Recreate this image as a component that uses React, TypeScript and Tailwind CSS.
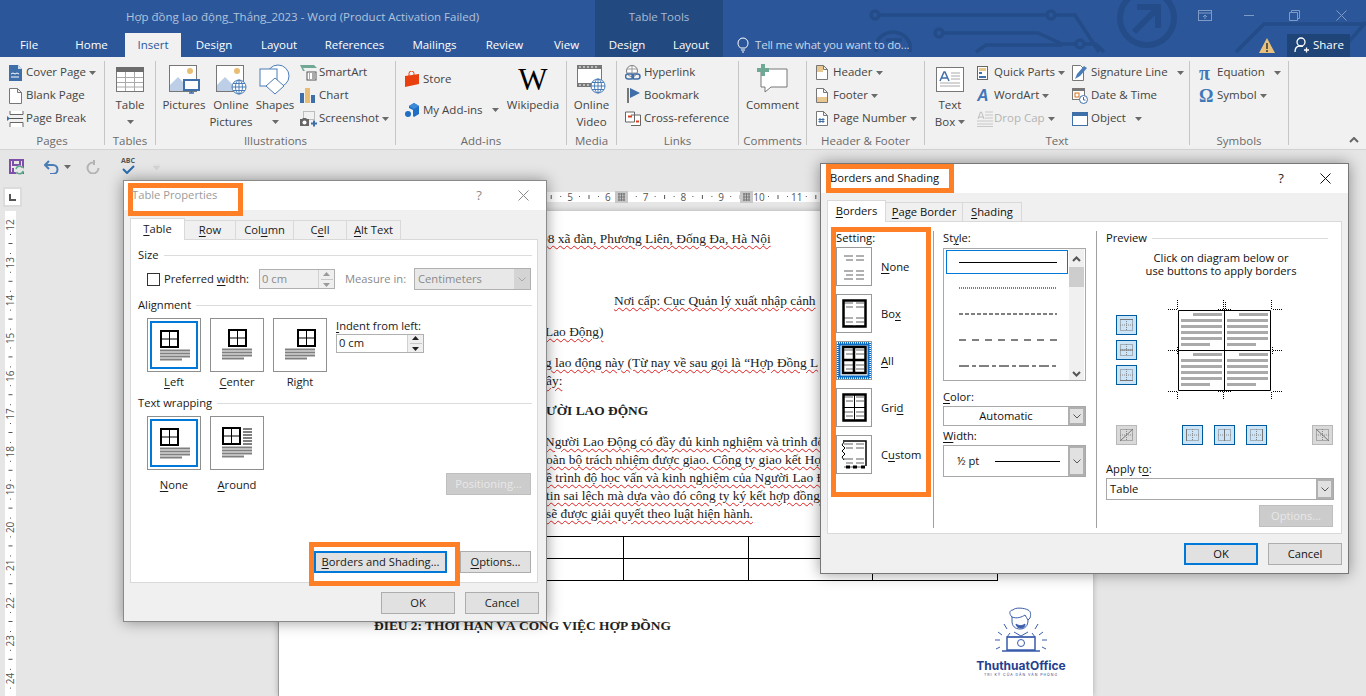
import type { ReactNode } from 'react';

const Caret = ({ className = '' }: { className?: string }) => (
  <svg width="7" height="4" viewBox="0 0 7 4" className={`shrink-0 ${className}`}>
    <path d="M0 0h7L3.500 4z" fill="#6a6a6a" />
  </svg>
);

// ---- ribbon icons ----
const CoverIcon = () => (
  <svg width="13" height="16" viewBox="0 0 13 16">
    <path d="M0 0h9l4 4v12H0z" fill="#3f6fa8" />
    <path d="M9 0v4h4z" fill="#cfdff0" />
    <path d="M2 9l2-1 2 1 2-1 2 1" stroke="#fff" fill="none" />
    <path d="M2 12h8" stroke="#fff" />
  </svg>
);
const BlankIcon = () => (
  <svg width="13" height="16" viewBox="0 0 13 16">
    <path d="M.5.5h8l4 4v11H.5z M8.500.5v4h4" fill="#fff" stroke="#777" />
  </svg>
);
const BreakIcon = () => (
  <svg width="17" height="16" viewBox="0 0 17 16">
    <path d="M3 0v3.500h13V0 M3 16v-4.500h13V16" fill="#fff" stroke="#666" />
    <path d="M1 7.500h15" stroke="#555" />
    <path d="M0 5l3 2.500L0 10z" fill="#3f6fa8" />
  </svg>
);
const TableIcon = () => (
  <svg width="28" height="25" viewBox="0 0 28 25">
    <rect x=".5" y=".5" width="27" height="24" fill="#fff" stroke="#777" />
    <rect width="28" height="5" fill="#6d6d6d" />
    <path d="M9.500 5v19M18.500 5v19M1 10.500h26M1 15.500h26M1 20h26" stroke="#aaa" />
  </svg>
);
const PictureBase = () => (
  <>
    <rect x=".5" y="1.500" width="27" height="26" fill="#fff" stroke="#777" />
    <circle cx="21" cy="7" r="3" fill="#e8bd74" />
    <path d="M1 27v-6l8-8 9 9v5z" fill="#bccfe6" />
  </>
);
const PicturesIcon = () => (
  <svg width="31" height="31" viewBox="0 0 31 31">
    <PictureBase />
    <rect x="15" y="16" width="15" height="10" fill="#fff" stroke="#3f6fa8" strokeWidth="2" />
    <path d="M20 29h5M22.500 26v3" stroke="#3f6fa8" strokeWidth="1.500" />
  </svg>
);
const Globe = ({ x, y, r }: { x: number; y: number; r: number }) => (
  <g stroke="#4a7db8" fill="#fff">
    <circle cx={x} cy={y} r={r} />
    <ellipse cx={x} cy={y} rx={r / 2} ry={r} fill="none" />
    <path d={`M${x - r} ${y}h${2 * r}M${x} ${y - r}v${2 * r}M${x - r + 1} ${y - r / 2}h${2 * r - 2}M${x - r + 1} ${y + r / 2}h${2 * r - 2}`} fill="none" />
  </g>
);
const OnlinePicIcon = () => (
  <svg width="31" height="31" viewBox="0 0 31 31">
    <PictureBase />
    <Globe x={23} y={23} r={7} />
  </svg>
);
const ShapesIcon = () => (
  <svg width="32" height="31" viewBox="0 0 32 31">
    <circle cx="19" cy="12" r="11" fill="#fff" stroke="#4a7db8" />
    <rect x="1" y="5" width="17" height="17" fill="#fff" stroke="#4a7db8" />
    <path d="M16 14l9 8-9 8-9-8z" fill="#fff" stroke="#4a7db8" />
  </svg>
);
const SmartArtIcon = () => (
  <svg width="17" height="16" viewBox="0 0 17 16">
    <path d="M0 0h14l3 3H3l2 3H3z" fill="#6fa894" />
    <rect x="7" y="7" width="9" height="8" fill="#fff" stroke="#555" />
    <path d="M9 9h1M12 9h3M9 11h1M12 11h3M9 13h1M12 13h3" stroke="#555" />
  </svg>
);
const ChartIcon = () => (
  <svg width="15" height="15" viewBox="0 0 15 15">
    <rect y="5" width="4" height="10" fill="#3f6fa8" />
    <rect x="5" width="5" height="15" fill="#e8bd74" />
    <rect x="11" y="7" width="4" height="8" fill="#3f6fa8" />
  </svg>
);
const ScreenshotIcon = () => (
  <svg width="17" height="16" viewBox="0 0 17 16">
    <rect x="3.500" y=".5" width="11" height="8" fill="none" stroke="#888" strokeDasharray="1 1" />
    <path d="M0 8h2l1-1h3l1 1h2v7H0z" fill="#666" />
    <circle cx="4.500" cy="11.500" r="2" fill="#fff" />
    <path d="M11 12.500h6M14 9.500v6" stroke="#3f6fa8" strokeWidth="2" />
  </svg>
);
const StoreIcon = () => (
  <svg width="14" height="16" viewBox="0 0 14 16">
    <path d="M0 5l14-2v10L0 16z" fill="#e8410f" />
    <path d="M4 5V2.500a2 2 0 0 1 5 0V4" fill="none" stroke="#e8410f" />
  </svg>
);
const AddInsIcon = () => (
  <svg width="14" height="15" viewBox="0 0 14 15">
    <circle cx="3" cy="11" r="3" fill="#1f6fc4" />
    <path d="M4 3l5-3 5 3v8l-5 3-1-1V7L4 5z" fill="#1f6fc4" />
    <path d="M9 0l5 3-5 3-5-3z" fill="#3d8ad8" />
  </svg>
);
const VideoIcon = () => (
  <svg width="29" height="29" viewBox="0 0 29 29">
    <rect x=".5" y=".5" width="24" height="21" fill="#fff" stroke="#777" />
    <rect width="25" height="4" fill="#777" />
    <rect y="18" width="25" height="4" fill="#777" />
    <path d="M2 2h2M6 2h2M10 2h2M14 2h2M18 2h2M2 20h2M6 20h2M10 20h2" stroke="#fff" />
    <Globe x={21} y={21} r={7} />
  </svg>
);
const HyperlinkIcon = () => (
  <svg width="16" height="16" viewBox="0 0 16 16">
    <circle cx="7" cy="6" r="5.500" fill="#fff" stroke="#777" />
    <path d="M7 .5v9M2 4h10M2 8h10" stroke="#999" />
    <rect x=".5" y="9" width="8" height="5" rx="2.500" fill="none" stroke="#3f6fa8" strokeWidth="1.500" />
    <rect x="7" y="9" width="8" height="5" rx="2.500" fill="none" stroke="#3f6fa8" strokeWidth="1.500" />
  </svg>
);
const BookmarkIcon = () => (
  <svg width="13" height="15" viewBox="0 0 13 15">
    <path d="M1 0v15" stroke="#777" strokeWidth="2" />
    <path d="M3 0l10 5-10 5z" fill="#3f6fa8" />
  </svg>
);
const CrossRefIcon = () => (
  <svg width="16" height="15" viewBox="0 0 16 15">
    <path d="M.5 1h9v10h-9z M6 4h9.500v10.500H6" fill="#fff" stroke="#666" />
    <path d="M3 5.500h4" stroke="#d8401f" strokeWidth="2" />
    <path d="M11 10.500h3" stroke="#d8401f" strokeWidth="2" />
  </svg>
);
const CommentIcon = () => (
  <svg width="31" height="30" viewBox="0 0 31 30">
    <path d="M4 5h26v18H14l-6 5v-5H4z" fill="#fff" stroke="#777" />
    <path d="M0 6h12M6 0v12" stroke="#6fa894" strokeWidth="4" />
  </svg>
);
const HeaderIcon = ({ band }: { band: 'top' | 'bottom' }) => (
  <svg width="12" height="15" viewBox="0 0 12 15">
    <path d="M.5.5h7l4 4v10H.5z M7.500.5v4h4" fill="#fff" stroke="#777" />
    <rect x="1" y={band === 'top' ? 1 : 9} width={band === 'top' ? 6 : 10} height={band === 'top' ? 6 : 5} fill="#e8c88e" />
  </svg>
);
const PageNumIcon = () => (
  <svg width="12" height="15" viewBox="0 0 12 15">
    <path d="M.5.5h7l4 4v10H.5z M7.500.5v4h4" fill="#fff" stroke="#777" />
    <path d="M4 7v5M7 7v5M2.500 8.500h6M2.500 10.500h6" stroke="#3f6fa8" />
  </svg>
);
const TextBoxIcon = () => (
  <svg width="28" height="25" viewBox="0 0 28 25">
    <rect x=".5" y=".5" width="27" height="24" fill="#fff" stroke="#777" />
    <path d="M15 6h9M15 9h9M15 12h9M4 16h20M4 19h20" stroke="#aaa" />
    <path d="M4 14l4-9h1l4 9M5.500 11h6" fill="none" stroke="#3f6fa8" strokeWidth="1.500" />
  </svg>
);
const QuickPartsIcon = () => (
  <svg width="11" height="14" viewBox="0 0 11 14">
    <rect x=".5" y=".5" width="10" height="13" fill="#fff" stroke="#666" />
    <rect x="2" y="2" width="7" height="3" fill="#e8c88e" />
    <rect x="2" y="6" width="3" height="2" fill="#3f6fa8" />
    <rect x="2" y="10" width="7" height="2" fill="#3f6fa8" />
  </svg>
);
const DropCapIcon = () => (
  <svg width="16" height="16" viewBox="0 0 16 16">
    <path d="M8 1h8M8 4h8M8 7h8M0 10h16M0 13h16M0 15.500h16" stroke="#c8c8c8" />
    <path d="M1 8l2.500-7h1L7 8M2 6h4" fill="none" stroke="#bdbdbd" />
  </svg>
);
const SignatureIcon = () => (
  <svg width="16" height="16" viewBox="0 0 16 16">
    <path d="M.5.5h8l3 3v12H.5z" fill="#fff" stroke="#777" />
    <path d="M3 14l2-5 7-8 3 2-7 8z" fill="#4a7db8" />
  </svg>
);
const DateIcon = () => (
  <svg width="16" height="16" viewBox="0 0 16 16">
    <rect x=".5" y=".5" width="12" height="11" fill="#fff" stroke="#777" />
    <rect width="13" height="3" fill="#777" />
    <rect x="3" y="5" width="4" height="4" fill="none" stroke="#d8701f" />
    <circle cx="11.500" cy="11.500" r="4" fill="#fff" stroke="#3f6fa8" />
    <path d="M11.500 9v3h2" fill="none" stroke="#3f6fa8" />
  </svg>
);
const ObjectIcon = () => (
  <svg width="16" height="14" viewBox="0 0 16 14">
    <rect x=".5" y=".5" width="15" height="13" fill="#fff" stroke="#3f6fa8" />
    <rect width="16" height="4" fill="#3f6fa8" />
  </svg>
);

const Large = ({ w, icon, lines, caretLine }: { w: string; icon: ReactNode; lines: ReactNode[]; caretLine?: boolean }) => (
  <div className={`flex flex-col items-center shrink-0 ${w}`}>
    <div className="h-[36px] flex items-center justify-center">{icon}</div>
    {lines.map((l, i) => (
      <div key={i} className="h-[17px] pb-[1px] flex items-center gap-[3px] whitespace-nowrap">{l}</div>
    ))}
    {caretLine && <Caret className="mt-[6px]" />}
  </div>
);

const Small = ({ icon, text, caret, wide, dim, iw = 'w-[17px]' }: { icon: ReactNode; text: string; caret?: boolean; wide?: boolean; dim?: boolean; iw?: string }) => (
  <div className={`h-[23px] flex items-center whitespace-nowrap ${dim ? 'text-[#b4b4b4]' : ''}`}>
    <span className={`${iw} flex items-center shrink-0`}>{icon}</span>
    <span className="-mt-[2px]">{text}</span>
    {caret && <Caret className={wide ? 'ml-[9px]' : 'ml-[3px]'} />}
  </div>
);

const Group = ({ w, label, children, className = '' }: { w: string; label: string; children: ReactNode; className?: string }) => (
  <div className={`${w} h-[84px] mt-[4px] flex flex-col border-r border-[#c6c6c6] shrink-0`}>
    <div className={`h-[72px] flex shrink-0 ${className}`}>{children}</div>
    <div className="h-[16px] shrink-0 leading-[16px] text-center text-[#6b6b6b] whitespace-nowrap">{label}</div>
  </div>
);

const Ribbon = () => (
  <div className="h-[93px] bg-[#f1f1f1] border-b border-[#d4d4d4] flex text-[#444] text-[11.5px] shrink-0">
    <Group w="w-[105px]" label="Pages" className="pl-[9px]">
      <div>
        <Small icon={<CoverIcon />} text="Cover Page" caret />
        <Small icon={<BlankIcon />} text="Blank Page" />
        <Small icon={<span className="-ml-[2px]"><BreakIcon /></span>} text="Page Break" />
      </div>
    </Group>
    <Group w="w-[51px]" label="Tables">
      <Large w="w-full" icon={<TableIcon />} lines={['Table']} caretLine />
    </Group>
    <Group w="w-[240px]" label="Illustrations" className="pl-[4px]">
      <Large w="w-[48px]" icon={<PicturesIcon />} lines={['Pictures']} />
      <Large w="w-[46px]" icon={<OnlinePicIcon />} lines={['Online', 'Pictures']} />
      <Large w="w-[42px]" icon={<ShapesIcon />} lines={['Shapes']} caretLine />
      <div className="ml-[4px]">
        <Small icon={<SmartArtIcon />} text="SmartArt" iw="w-[19px]" />
        <Small icon={<ChartIcon />} text="Chart" iw="w-[19px]" />
        <Small icon={<ScreenshotIcon />} text="Screenshot" caret iw="w-[19px]" />
      </div>
    </Group>
    <Group w="w-[171px]" label="Add-ins" className="pl-[9px]">
      <div className="w-[105px] shrink-0 whitespace-nowrap">
        <div className="h-[36px] flex items-center"><span className="w-[18px]"><StoreIcon /></span>Store</div>
        <div className="h-[26px] flex items-center"><span className="w-[18px]"><AddInsIcon /></span>My Add-ins<Caret className="ml-[9px]" /></div>
      </div>
      <Large w="w-[46px]" icon={<span className="font-['Liberation_Serif',serif] text-[31px] leading-[31px] text-black">W</span>} lines={['Wikipedia']} />
    </Group>
    <Group w="w-[50px]" label="Media">
      <Large w="w-full" icon={<VideoIcon />} lines={['Online', 'Video']} />
    </Group>
    <Group w="w-[122px]" label="Links" className="pl-[8px]">
      <div>
        <Small icon={<HyperlinkIcon />} text="Hyperlink" iw="w-[19px]" />
        <Small icon={<span className="ml-[2px]"><BookmarkIcon /></span>} text="Bookmark" iw="w-[19px]" />
        <Small icon={<CrossRefIcon />} text="Cross-reference" iw="w-[19px]" />
      </div>
    </Group>
    <Group w="w-[68px]" label="Comments">
      <Large w="w-full" icon={<CommentIcon />} lines={['Comment']} />
    </Group>
    <Group w="w-[118px]" label="Header & Footer" className="pl-[9px]">
      <div>
        <Small icon={<HeaderIcon band="top" />} text="Header" caret />
        <Small icon={<HeaderIcon band="bottom" />} text="Footer" caret />
        <Small icon={<PageNumIcon />} text="Page Number" caret />
      </div>
    </Group>
    <Group w="w-[265px]" label="Text">
      <Large w="w-[50px]" icon={<TextBoxIcon />} lines={['Text', <>Box<Caret /></>]} />
      <div className="ml-[2px] w-[95px] shrink-0">
        <Small icon={<QuickPartsIcon />} text="Quick Parts" caret />
        <Small icon={<span className="font-['Liberation_Sans',sans-serif] italic font-bold text-[16px] leading-[16px] text-[#3f78b8]">A</span>} text="WordArt" caret />
        <Small icon={<DropCapIcon />} text="Drop Cap" caret dim />
      </div>
      <div>
        <Small icon={<SignatureIcon />} text="Signature Line" caret wide iw="w-[19px]" />
        <Small icon={<DateIcon />} text="Date & Time" iw="w-[19px]" />
        <Small icon={<ObjectIcon />} text="Object" caret wide iw="w-[19px]" />
      </div>
    </Group>
    <Group w="w-[99px]" label="Symbols" className="pl-[9px]">
      <div>
        <Small icon={<span className="font-['Liberation_Serif',serif] font-bold text-[20px] leading-[18px] text-[#3f78b8]">π</span>} text="Equation" caret wide iw="w-[18px]" />
        <Small icon={<span className="font-['Liberation_Serif',serif] font-bold text-[18px] leading-[18px] text-[#3f78b8]">Ω</span>} text="Symbol" caret iw="w-[18px]" />
      </div>
    </Group>
    <div className="flex-1 flex items-end justify-end pr-[7px] pb-[6px]">
      <svg width="10" height="6" viewBox="0 0 10 6"><path d="M1 5l4-4 4 4" fill="none" stroke="#666" strokeWidth="2" /></svg>
    </div>
  </div>
);

// ---- title bar ----
const CircuitArt = () => (
  <svg width="1366" height="57" viewBox="0 0 1366 57" className="absolute inset-0 pointer-events-none">
    <g fill="none" stroke="#234c88" strokeWidth="3.500">
      <path d="M880 15h167M1055 15h20l24 37M943 33h95l24 11h14M1084 44h12l8 8M976 52l10-7h76" />
      <circle cx="875" cy="15" r="4" />
      <circle cx="939" cy="33" r="4" />
      <circle cx="1051" cy="15" r="4" />
      <circle cx="1080" cy="44" r="4" />
      <path d="M876 52v-8a18 18 0 0 1 34 0v8M886 40h16" />
      <path d="M1236 52l28-28h102M1340 52l26-30" />
    </g>
    <circle cx="1147" cy="18" r="27" fill="none" stroke="#234c88" strokeWidth="6" />
    <path d="M1134 32l22-22M1137 7h21v21" fill="none" stroke="#234c88" strokeWidth="6" />
  </svg>
);

const tabs: [string, string][] = [
  ['File', 'w-[58px]'], ['Home', 'w-[67px]'], ['Insert', 'w-[56px]'], ['Design', 'w-[66px]'], ['Layout', 'w-[64px]'],
  ['References', 'w-[87px]'], ['Mailings', 'w-[73px]'], ['Review', 'w-[67px]'], ['View', 'w-[57px]'],
];

const TitleBar = () => (
  <div className="relative h-[57px] bg-[#2b579a] text-white text-[11.5px] shrink-0 overflow-hidden">
    <CircuitArt />
    <div className="relative h-[33px] flex">
      <div className="w-[595px] pl-[126px] pt-[8px] text-[#b3c3dc] whitespace-nowrap">Hợp đồng lao động_Thắng_2023 - Word (Product Activation Failed)</div>
      <div className="w-[128px] bg-[#234a80] pt-[8px] text-center text-[#a9bad4]">Table Tools</div>
      <div className="flex-1 flex items-start text-[#7f9ac4]">
        <svg width="14" height="11" viewBox="0 0 14 11" className="ml-[475px] mt-[10px]"><rect x=".5" y=".5" width="13" height="10" fill="none" stroke="#7f9ac4" /><path d="M.5 3h13M7 9V5M5 7l2-2 2 2" fill="none" stroke="#7f9ac4" /></svg>
        <div className="ml-[32px] mt-[15px] w-[10px] h-px bg-[#7f9ac4]" />
        <svg width="11" height="11" viewBox="0 0 11 11" className="ml-[35px] mt-[10px]"><path d="M2.500 2.500v-2h8v8h-2M.5 2.500h8v8h-8z" fill="none" stroke="#7f9ac4" /></svg>
        <svg width="11" height="11" viewBox="0 0 11 11" className="ml-[36px] mt-[10px]"><path d="M.5.5l10 10M10.500.5l-10 10" stroke="#7f9ac4" /></svg>
      </div>
    </div>
    <div className="relative h-[24px] flex items-center pr-[16px]">
      {tabs.map(([t, w]) => (
        <div key={t} className={`${w} h-full flex items-center justify-center ${t === 'Insert' ? 'bg-[#f1f1f1] text-[#2b579a]' : ''}`}>{t}</div>
      ))}
      <div className="w-[128px] h-full bg-[#234a80] flex">
        <div className="w-[64px] flex items-center justify-center">Design</div>
        <div className="w-[64px] flex items-center justify-center">Layout</div>
      </div>
      <svg width="12" height="16" viewBox="0 0 12 16" className="ml-[14px]"><path d="M3.500 11C2 9.500 1 8.500 1 6a5 5 0 0 1 10 0c0 2.500-1 3.500-2.500 5zM4 13h4M5 15h2" fill="none" stroke="#fff" /></svg>
      <span className="ml-[6px] text-[#c9d5e8] whitespace-nowrap tracking-[-0.2px]">Tell me what you want to do...</span>
      <svg width="16" height="15" viewBox="0 0 16 15" className="ml-auto"><path d="M8 0l8 15H0z" fill="#e8c27c" /><path d="M8 5v6M8 12v2" stroke="#333" strokeWidth="1.500" /></svg>
      <div className="ml-[12px] w-[63px] h-[23px] bg-[#1f4478] flex items-center pl-[7px] gap-[4px]">
        <svg width="15" height="16" viewBox="0 0 15 16"><circle cx="7" cy="5" r="4" fill="none" stroke="#fff" strokeWidth="1.300" /><path d="M1 15c0-4 2-6 5-6 1 0 2 0 3 .5M10 13h5M12.500 10.500v5" fill="none" stroke="#fff" strokeWidth="1.300" /></svg>
        Share
      </div>
    </div>
  </div>
);

// ---- rulers ----
const HRuler = () => (
  <svg width="1093" height="16" viewBox="0 -3 1093 16" className="block">
    <rect x="279" width="814" height="10" fill="#fff" />
    {[4, 5, 6, 7, 8, 9, 10, 11].map((i) => {
      const x = 381 + i * 37.8;
      return (
        <g key={i} fill="#555">
          {i > 4 && <text x={x} y="8.500" fontSize="10" textAnchor="middle" fontFamily="Open Sans, sans-serif">{i}</text>}
          <rect x={x + 9} y="4" width="1" height="1" />
          <rect x={x + 18.500} y="3" width="1" height="4" />
          <rect x={x + 28} y="4" width="1" height="1" />
        </g>
      );
    })}
    {[615, 740].map((x) => (
      <g key={x}>
        <rect x={x} y="-1" width="13" height="12" fill="#c8c8c8" />
        <path d={`M${x + 3} 2h7M${x + 3} 5h7M${x + 3} 8h7M${x + 4} 1v8M${x + 6.500} 1v8M${x + 9} 1v8`} stroke="#777" />
      </g>
    ))}
  </svg>
);

const VRuler = () => (
  <svg width="17" height="485" viewBox="-3 0 17 485" className="block">
    <rect width="11" height="485" fill="#fff" />
    {Array.from({ length: 13 }, (_, i) => {
      const y = 14 + i * 37.8;
      return (
        <g key={i} fill="#555">
          <text transform={`translate(8.500 ${y}) rotate(-90)`} fontSize="10" textAnchor="middle" fontFamily="Open Sans, sans-serif">{12 + i}</text>
          <rect x="5" y={y + 9} width="1" height="1" />
          <rect x="3.500" y={y + 18} width="4" height="1" />
          <rect x="5" y={y + 28} width="1" height="1" />
        </g>
      );
    })}
  </svg>
);

// ---- quick access ----
const QuickAccess = () => (
  <div className="h-[37px] flex items-center pl-[9px] pb-[3px] shrink-0">
    <svg width="16" height="16" viewBox="0 0 16 16">
      <path d="M1 1h13v13H1zM4 1v5h7V1M4 14V9" fill="none" stroke="#7d4fa8" strokeWidth="2" />
      <circle cx="10.500" cy="11" r="4.500" fill="#e6e6e6" />
      <path d="M7 10a3.500 3.500 0 0 1 6.500-1M14 12a3.500 3.500 0 0 1-6.500 1" fill="none" stroke="#5ba88a" strokeWidth="1.500" />
    </svg>
    <svg width="15" height="14" viewBox="0 0 15 14" className="ml-[19px]"><path d="M5 1L1 5l4 4M2 5h7a4.500 4.500 0 0 1 0 9H6" fill="none" stroke="#4a7db8" strokeWidth="2" /></svg>
    <Caret className="ml-[5px]" />
    <svg width="14" height="14" viewBox="0 0 14 14" className="ml-[15px]"><path d="M8 2.500H7a5.500 5.500 0 1 0 5.500 5.500M8 0v5" fill="none" stroke="#b4b4b4" strokeWidth="2" /></svg>
    <div className="ml-[21px] flex flex-col items-center -mt-[4px]">
      <span className="text-[7px] leading-[9px] font-bold text-[#555]">ABC</span>
      <svg width="13" height="9" viewBox="0 0 13 9"><path d="M1 4l4 4 7-7" fill="none" stroke="#2b6cb0" strokeWidth="2" /></svg>
    </div>
    <svg width="7" height="6" viewBox="0 0 7 6" className="ml-[18px]"><path d="M0 0h7M0 2h7L3.500 6z" fill="#d4d4d4" stroke="#d4d4d4" strokeWidth=".5" /></svg>
  </div>
);

// ---- document ----
const wavy = 'underline decoration-wavy decoration-[#e02020] decoration-1 underline-offset-2';

const Page = () => (
  <div className="relative w-[815px] h-[485px] bg-white border-l border-[#9a9a9a] shadow-[0_0_6px_rgba(0,0,0,0.25)] font-['Liberation_Serif',serif] text-[13.4px] leading-[18px] text-[#222] whitespace-nowrap">
    <p className={`pt-[19px] ml-[262px] ${wavy}`}>98 xã đàn, Phương Liên, Đống Đa, Hà Nội</p>
    <p className={`mt-[44px] ml-[335px] ${wavy}`}>Nơi cấp: Cục Quản lý xuất nhập cảnh</p>
    <p className={`mt-[13px] ml-[266px] ${wavy}`}>Lao Động)</p>
    <p className={`mt-[13px] ml-[266px] ${wavy}`}>g lao động này (Từ nay về sau gọi là “Hợp Đồng L</p>
    <p className={`ml-[267px] ${wavy}`}>ây:</p>
    <p className="mt-[12px] ml-[267px] font-bold">ƯỜI LAO ĐỘNG</p>
    <p className={`mt-[13px] ml-[266px] ${wavy}`}>Người Lao Động có đầy đủ kinh nghiệm và trình độ</p>
    <p className={`ml-[267px] ${wavy}`}>oàn bộ trách nhiệm được giao. Công ty giao kết Hợp</p>
    <p className={`ml-[267px] ${wavy}`}>ề trình độ học vấn và kinh nghiệm của Người Lao Độ</p>
    <p className={`ml-[267px] ${wavy}`}>tin sai lệch mà dựa vào đó công ty ký kết hợp đồng</p>
    <p className={`ml-[267px] ${wavy}`}>sẽ được giải quyết theo luật hiện hành.</p>
    <div className="mt-[13px] ml-[95px] w-[624px] grid grid-cols-5 border-t border-l border-black">
      {Array.from({ length: 10 }, (_, i) => (
        <div key={i} className="h-[22px] border-r border-b border-black" />
      ))}
    </div>
    <p className="mt-[36px] ml-[95px] font-bold">ĐIỀU 2: THỜI HẠN VÀ CÔNG VIỆC HỢP ĐỒNG</p>
    <div className="absolute left-[694px] top-[396px] w-[96px] flex flex-col items-center font-['Inter',sans-serif] text-[#24408f]">
      <svg width="52" height="48" viewBox="0 0 52 48" fill="none" stroke="#3a5cab">
        <path d="M17 10c-3-3-3-7 1-7 2-3 12-2 15 0 3 1 3 5 2 8l-2 2c0 6-3 9-8 9s-8-3-8-8z" />
        <path d="M17 10c5 2 10 0 13-2 1 2 2 3 3 5" />
        <path d="M21 17c2 2 7 2 9 0 0 3-2 4-4 4s-5-1-5-4z" fill="#3a5cab" />
        <path d="M15 26l-3 4h28l-3-4M19 25l7 4 7-4" />
        <path d="M12 30h28v13H12zM7 44h38" strokeWidth="1.500" />
        <circle cx="26" cy="36" r="3.500" />
        <path d="M3 25l4 3M44 28l4-3M0 33h5M47 33h5M1 42l4-2M47 40l4 2M9 17l3 5M43 17l-3 5" />
      </svg>
      <span className="mt-[4px] font-bold text-[12px] leading-[13px]">ThuthuatOffice</span>
      <span className="text-[3.500px] leading-[6px] tracking-[1px]">TRI KỶ CỦA DÂN VĂN PHÒNG</span>
    </div>
  </div>
);

// ---- dialog parts ----
const Under = ({ children }: { children: ReactNode }) => <span className="underline underline-offset-2">{children}</span>;

const Button = ({ w = 'w-[74px]', focus, disabled, children }: { w?: string; focus?: boolean; disabled?: boolean; children: ReactNode }) => (
  <div className={`${w} h-[22px] flex items-center justify-center shrink-0 whitespace-nowrap ${focus ? 'border-2 border-[#0078d7] bg-[#e1e1e1]' : disabled ? 'border border-[#bfbfbf] bg-[#cccccc] text-[#e8e8e8]' : 'border border-[#adadad] bg-[#e1e1e1]'}`}>
    {children}
  </div>
);

const CloseBtns = ({ dim }: { dim?: boolean }) => (
  <div className={`ml-auto flex items-center ${dim ? 'text-[#8a8a8a]' : 'text-[#222]'}`}>
    <span className="text-[13px] w-[12px] text-center">?</span>
    <svg width="11" height="11" viewBox="0 0 11 11" className="ml-[33px] mr-[17px]">
      <path d="M.5.5l10 10M10.500.5l-10 10" stroke={dim ? '#8a8a8a' : '#111'} />
    </svg>
  </div>
);

const Tab = ({ w, active, children }: { w: string; active?: boolean; children: ReactNode }) => (
  <div className={`${w} flex items-center justify-center border border-[#d9d9d9] ${active ? 'h-[22px] bg-white border-b-0 relative z-10' : 'h-[20px] mt-[2px] -ml-px bg-[#f0f0f0]'}`}>{children}</div>
);

const SectionHead = ({ label }: { label: string }) => (
  <div className="h-[16px] flex items-center gap-[5px]">
    <span className="whitespace-nowrap">{label}</span>
    <div className="flex-1 h-px bg-[#dcdcdc]" />
  </div>
);

const Spin = ({ dim }: { dim?: boolean }) => (
  <div className="w-[16px] h-full border-l border-[#d0d0d0] bg-[#efefef] flex flex-col items-center justify-center gap-[3px]">
    <svg width="7" height="4" viewBox="0 0 7 4"><path d="M3.500 0L7 4H0z" fill={dim ? '#9a9a9a' : '#222'} /></svg>
    <div className="w-[12px] h-px bg-[#c8c8c8]" />
    <svg width="7" height="4" viewBox="0 0 7 4"><path d="M0 0h7L3.500 4z" fill={dim ? '#9a9a9a' : '#222'} /></svg>
  </div>
);

const Chevron = ({ dim }: { dim?: boolean }) => (
  <svg width="8" height="5" viewBox="0 0 8 5"><path d="M.5.5L4 4 7.500.5" fill="none" stroke={dim ? '#a8a8a8' : '#555'} /></svg>
);

const AlignBox = ({ kind, selected }: { kind: 'left' | 'center' | 'right' | 'around'; selected?: boolean }) => {
  const tx = kind === 'center' ? 18 : kind === 'right' ? 24 : 12;
  return (
    <div className={`w-[54px] h-[54px] border border-[#8e8f8f] bg-white ${selected ? 'p-[2px]' : 'p-[3px]'}`}>
      <div className={`w-full h-full ${selected ? 'border-[2px] border-[#0078d7]' : ''}`}>
        <svg width="54" height="54" viewBox="0 0 54 54" className="-ml-[4px] -mt-[4px]">
          <rect x={tx + 1} y="12" width="17" height="16" fill="#fff" stroke="#000" strokeWidth="2" />
          <path d={`M${tx + 9.500} 12v16M${tx + 1} 20h17`} stroke="#000" />
          {kind === 'around' && <path d="M33 13h9M33 16h9M33 19h9M33 22h9M33 25h9M33 28h9" stroke="#808080" strokeWidth="2" />}
          <path d="M12 31.500h30M12 34.500h30M12 37.500h30M12 40.500h22" stroke="#808080" strokeWidth="2" />
        </svg>
      </div>
    </div>
  );
};

const AlignOption = ({ kind, selected, gap, children }: { kind: 'left' | 'center' | 'right' | 'around'; selected?: boolean; gap: string; children: ReactNode }) => (
  <div className="w-[54px] shrink-0 flex flex-col items-center">
    <AlignBox kind={kind} selected={selected} />
    <div className={`${gap} h-[16px] leading-[16px] whitespace-nowrap`}>{children}</div>
  </div>
);

const TablePropertiesDialog = () => (
  <div className="absolute left-[123px] top-[180px] w-[424px] h-[442px] border border-[#8a8a8a] bg-[#f0f0f0] shadow-[0_0_14px_rgba(0,0,0,0.4)] text-[11.200px] text-[#1a1a1a]">
    <div className="h-[29px] bg-white flex items-center pl-[8px] relative">
      <div className="absolute left-[4px] top-[2px] w-[115px] h-[33px] border-[5px] border-[#ff7f27] bg-white z-10" />
      <span className="relative z-20 text-[#9c9c9c] mb-[1px]">Table Properties</span>
      <CloseBtns dim />
    </div>
    <div className="flex pt-[8px] pl-[6px] h-[30px]">
      <Tab w="w-[55px]" active><Under>T</Under>able</Tab>
      <Tab w="w-[52px]"><Under>R</Under>ow</Tab>
      <Tab w="w-[59px]">Col<Under>u</Under>mn</Tab>
      <Tab w="w-[54px]">C<Under>e</Under>ll</Tab>
      <Tab w="w-[55px]"><Under>A</Under>lt Text</Tab>
    </div>
    <div className="relative ml-[6px] -mt-px w-[408px] h-[344px] border border-[#d9d9d9] bg-white pt-[7px] pl-[7px] pr-[5px] flex flex-col">
      <SectionHead label="Size" />
      <div className="mt-[5px] h-[22px] flex items-center">
        <div className="ml-[9px] w-[13px] h-[13px] border border-[#333] bg-white shrink-0" />
        <span className="ml-[4px] w-[95px] whitespace-nowrap">Preferred <Under>w</Under>idth:</span>
        <div className="w-[76px] h-[20px] border border-[#b0b0b0] flex items-center justify-between text-[#8a8a8a]">
          <span className="pl-[2px] flex-1 h-full bg-[#efefef] leading-[18px]">0 cm</span>
          <Spin dim />
        </div>
        <span className="ml-[10px] w-[69px] text-[#8a8a8a] whitespace-nowrap">Measure in:</span>
        <div className="w-[117px] h-[22px] border border-[#b0b0b0] bg-[#e8e8e8] flex items-center justify-between pl-[3px] text-[#8a8a8a]">
          Centimeters
          <span className="w-[16px] h-full bg-[#d4d4d4] flex items-center justify-center"><Chevron dim /></span>
        </div>
      </div>
      <div className="mt-[7px]"><SectionHead label="Alignment" /></div>
      <div className="mt-[5px] ml-[9px] flex gap-[9px]">
        <AlignOption kind="left" selected gap="mt-[2px]"><Under>L</Under>eft</AlignOption>
        <AlignOption kind="center" gap="mt-[2px]"><Under>C</Under>enter</AlignOption>
        <AlignOption kind="right" gap="mt-[2px]">Ri<Under>g</Under>ht</AlignOption>
        <div>
          <div className="h-[14px] leading-[14px] mt-[1px] whitespace-nowrap"><Under>I</Under>ndent from left:</div>
          <div className="mt-[1px] w-[88px] h-[19px] border border-[#b0b0b0] flex items-center">
            <span className="flex-1 pl-[2px]">0 cm</span>
            <Spin />
          </div>
        </div>
      </div>
      <div className="mt-[5px]"><SectionHead label="Text wrapping" /></div>
      <div className="mt-[5px] ml-[9px] flex gap-[9px]">
        <AlignOption kind="left" selected gap="mt-[7px]"><Under>N</Under>one</AlignOption>
        <AlignOption kind="around" gap="mt-[7px]"><Under>A</Under>round</AlignOption>
        <div className="ml-auto mr-px mt-[57px]"><Button w="w-[85px]" disabled>Positioning...</Button></div>
      </div>
      <div className="mt-[56px] flex justify-end gap-[13px]">
        <div className="relative">
          <div className="absolute -left-[5px] -top-[9px] w-[151px] h-[44px] border-[5px] border-[#ff7f27] bg-white" />
          <div className="relative"><Button w="w-[133px]" focus><Under>B</Under>orders and Shading...</Button></div>
        </div>
        <div className="relative mr-px"><Button w="w-[71px]"><Under>O</Under>ptions...</Button></div>
      </div>
    </div>
    <div className="mt-[9px] pr-[7px] flex justify-end gap-[10px]">
      <Button>OK</Button>
      <Button>Cancel</Button>
    </div>
  </div>
);

const Dashes = ({ x, rows, c = '#b0b0b0' }: { x: number; rows: number[]; c?: string }) => (
  <path d={rows.map((y, i) => `M${x + (i % 2 ? 2 : 0)} ${y}h${i % 2 ? 7 : 9}M${x + 12} ${y}h${8}`).join('')} stroke={c} strokeWidth="2" />
);

const SettingBox = ({ kind }: { kind: 'none' | 'box' | 'all' | 'grid' | 'custom' }) => (
  <div className="w-[36px] h-[39px] border border-[#999] bg-white shrink-0">
    <svg width="34" height="37" viewBox="0 0 34 37">
      {kind === 'all' && <rect x="1" y="1" width="32" height="35" fill="#fff" stroke="#0a6cc4" strokeWidth="2" strokeDasharray="1 1" />}
      {kind === 'all' && <rect x="2.500" y="2.500" width="29" height="32" fill="none" stroke="#0a6cc4" strokeWidth="2" />}
      <Dashes x={7} rows={[8, 12, 23, 27, 31]} />
      {kind === 'box' && <rect x="6.500" y="5.500" width="22" height="26" fill="none" stroke="#000" strokeWidth="2.500" />}
      {kind === 'all' && <path d="M6 5h22.500v26H6zM17 5v26M6 18h22" fill="none" stroke="#000" strokeWidth="2.500" />}
      {kind === 'grid' && (
        <>
          <rect x="6.500" y="5.500" width="22" height="26" fill="none" stroke="#000" strokeWidth="2.500" />
          <path d="M17.500 5v26M6 18.500h22" stroke="#000" />
        </>
      )}
      {kind === 'custom' && (
        <>
          <path d="M6 5h23v25" fill="none" stroke="#000" strokeWidth="1.500" />
          <path d="M7 6l-2 3 3 3-3 3 3 3-3 3 2 3" fill="none" stroke="#000" />
          <path d="M9 31h4M16 31h4M24 31h4" stroke="#000" strokeWidth="3" />
        </>
      )}
    </svg>
  </div>
);

const SettingRow = ({ kind, children }: { kind: 'none' | 'box' | 'all' | 'grid' | 'custom'; children: ReactNode }) => (
  <div className="flex items-center mb-[8px]">
    <SettingBox kind={kind} />
    <span className="ml-[9px] mt-[1px]">{children}</span>
  </div>
);

const Combo = ({ h, w = 'w-[143px]', children }: { h: string; w?: string; children: ReactNode }) => (
  <div className={`${w} ${h} border border-[#a8a8a8] flex items-stretch`}>
    <div className="flex-1 flex items-center">{children}</div>
    <div className="w-[17px] bg-[#e1e1e1] border-2 border-[#b0b0b0] flex items-center justify-center"><Chevron /></div>
  </div>
);

const BorderBtn = ({ line, disabled }: { line: string; disabled?: boolean }) => (
  <svg width="21" height="20" viewBox="0 0 21 20" className="block shrink-0">
    <rect x=".5" y=".5" width="20" height="19" fill={disabled ? '#d9d9d9' : '#cce4f7'} stroke={disabled ? '#b8b8b8' : '#005a9e'} />
    <rect x="4.500" y="4.500" width="12" height="11" fill="none" stroke="#777" strokeDasharray="1 1" />
    <path d="M10.500 4v12M4 10h13" stroke="#888" strokeDasharray="1 1" />
    <path d={line} stroke="#777" fill="none" />
  </svg>
);

const TableLines = ({ x, y }: { x: number; y: number }) => (
  <path d={`M${x + 14} ${y + 3.500}h29M${x + 2} ${y + 9.500}h41M${x + 2} ${y + 15.500}h41M${x + 2} ${y + 21.500}h41M${x + 2} ${y + 27.500}h41M${x + 2} ${y + 33.500}h29`} stroke="#aaa" strokeWidth="3" />
);

const PreviewTable = () => (
  <svg width="114" height="100" viewBox="0 0 114 100" className="block shrink-0">
    <TableLines x={11} y={11} />
    <TableLines x={57} y={11} />
    <TableLines x={11} y={51} />
    <TableLines x={57} y={51} />
    <path d="M10.500 10.500h92v80h-92zM56.500 10v81M10 50.500h93" fill="none" stroke="#000" />
    <path d="M9.500 0v9M55.500 0v9M57.500 2v7M103.500 0v9M0 9.500h9M50 9.500h13M105 9.500h9M0 50.500h9M105 50.500h9M9.500 47v7M104.500 47v7M0 91.500h9M50 91.500h13M105 91.500h9M9.500 92v8M55.500 92v8M103.500 92v8" stroke="#000" strokeDasharray="1 1" />
  </svg>
);

const StyleLine = ({ dash }: { dash: string }) => (
  <div className="h-[26px] flex items-center pl-[13px]">
    <svg width="98" height="2" viewBox="0 0 98 2" className="block"><path d="M0 1h98" stroke="#000" strokeDasharray={dash} /></svg>
  </div>
);

const BordersDialog = () => (
  <div className="absolute left-[820px] top-[163px] w-[529px] h-[411px] border border-[#777] bg-[#f0f0f0] shadow-[0_0_14px_rgba(0,0,0,0.4)] text-[11.200px] text-[#111]">
    <div className="h-[29px] bg-white flex items-center relative">
      <div className="absolute left-[5px] top-0 w-[128px] h-[29px] border-[5px] border-[#ff7f27] bg-white" />
      <span className="relative ml-[9px]">Borders and Shading</span>
      <CloseBtns />
    </div>
    <div className="flex pt-[7px] pl-[6px] h-[29px]">
      <Tab w="w-[59px]" active><Under>B</Under>orders</Tab>
      <Tab w="w-[78px]"><Under>P</Under>age Border</Tab>
      <Tab w="w-[60px]"><Under>S</Under>hading</Tab>
    </div>
    <div className="relative ml-[6px] -mt-px w-[515px] h-[313px] border border-[#d9d9d9] bg-white pt-[9px] flex">
      <div className="absolute left-[3px] top-[5px] w-[100px] h-[270px] border-[5px] border-[#ff7f27]" />
      <div className="relative w-[105px] pl-[8px] shrink-0">
        <div className="h-[14px] leading-[14px]">Setting:</div>
        <div className="mt-[2px]">
          <SettingRow kind="none"><Under>N</Under>one</SettingRow>
          <SettingRow kind="box">Bo<Under>x</Under></SettingRow>
          <SettingRow kind="all"><Under>A</Under>ll</SettingRow>
          <SettingRow kind="grid">Gri<Under>d</Under></SettingRow>
          <SettingRow kind="custom">C<Under>u</Under>stom</SettingRow>
        </div>
      </div>
      <div className="w-[163px] h-[297px] border-l border-[#a0a0a0] pl-[9px] shrink-0">
        <div className="h-[14px] leading-[14px]">St<Under>y</Under>le:</div>
        <div className="mt-[3px] w-[143px] h-[133px] border border-[#a8a8a8] flex">
          <div className="w-[124px] pt-[1px] pl-[2px]">
            <div className="h-[24px] border border-[#0078d7] flex items-center pl-[12px]">
              <div className="w-[98px] border-t border-black" />
            </div>
            <div className="mt-[1px]"><StyleLine dash="1 1" /></div>
            <StyleLine dash="4 2" />
            <StyleLine dash="7 6" />
            <StyleLine dash="10 3 4 3" />
          </div>
          <div className="w-[15px] ml-[1px] bg-[#f0f0f0] flex flex-col items-center">
            <svg width="9" height="6" viewBox="0 0 9 6" className="mt-[7px]"><path d="M1 5l3.500-3.500L8 5" fill="none" stroke="#555" strokeWidth="2" /></svg>
            <div className="w-full h-[20px] mt-[5px] bg-[#cdcdcd]" />
            <svg width="9" height="6" viewBox="0 0 9 6" className="mt-auto mb-[3px]"><path d="M1 1l3.500 3.500L8 1" fill="none" stroke="#555" strokeWidth="2" /></svg>
          </div>
        </div>
        <div className="mt-[9px] h-[14px] leading-[14px]"><Under>C</Under>olor:</div>
        <div className="mt-[2px]"><Combo h="h-[20px]"><span className="w-full text-center">Automatic</span></Combo></div>
        <div className="mt-[3px] h-[14px] leading-[14px]"><Under>W</Under>idth:</div>
        <div className="mt-[2px]">
          <Combo h="h-[32px]">
            <span className="ml-[13px]">½ pt</span>
            <div className="ml-[16px] w-[65px] border-t border-black" />
          </Combo>
        </div>
      </div>
      <div className="w-[238px] h-[297px] border-l border-[#a0a0a0] pl-[9px] flex flex-col shrink-0">
        <div className="h-[14px] flex items-center gap-[5px] pr-[6px]">Preview<div className="flex-1 h-px bg-[#dcdcdc]" /></div>
        <div className="mt-[6px] text-center leading-[13px] pl-[2px]">
          <div>Click on diagram below or</div>
          <div>use buttons to apply borders</div>
        </div>
        <div className="mt-[23px] h-[100px] flex">
          <div className="ml-[10px] pt-[15px] flex flex-col gap-[5px]">
            <BorderBtn line="M4 4.500h13" />
            <BorderBtn line="M4 10h13" />
            <BorderBtn line="M4 15.500h13" />
          </div>
          <div className="ml-[31px]"><PreviewTable /></div>
        </div>
        <div className="mt-[25px] flex">
          <div className="ml-[10px]"><BorderBtn disabled line="M4 16L17 4" /></div>
          <div className="ml-[45px]"><BorderBtn line="M4.500 4v12" /></div>
          <div className="ml-[11px]"><BorderBtn line="M10.500 4v12" /></div>
          <div className="ml-[11px]"><BorderBtn line="M16.500 4v12" /></div>
          <div className="ml-[45px]"><BorderBtn disabled line="M4 4l13 12" /></div>
        </div>
        <div className="mt-[17px] h-[14px] leading-[14px]">Apply t<Under>o</Under>:</div>
        <div className="mt-[2px]"><Combo h="h-[22px]" w="w-[228px]"><span className="pl-[3px]">Table</span></Combo></div>
        <div className="mt-[5px] ml-[153px]"><Button disabled>Options...</Button></div>
      </div>
    </div>
    <div className="mt-[9px] pr-[6px] flex justify-end gap-[10px]">
      <Button focus>OK</Button>
      <Button>Cancel</Button>
    </div>
  </div>
);

export default function App() {
  return (
    <div className="relative w-[1366px] h-[696px] overflow-hidden flex flex-col bg-[#e6e6e6] font-['Open_Sans',sans-serif]">
      <TitleBar />
      <Ribbon />
      <div className="flex-1 flex flex-col min-h-0">
        <QuickAccess />
        <div className="h-[24px] flex shrink-0">
          <div className="ml-[3px] w-[19px] h-[20px] bg-[#dcdcdc] p-[2px] shrink-0">
            <div className="w-full h-full bg-white flex items-center justify-center">
              <div className="w-[7px] h-[7px] border-l-2 border-b-2 border-[#555]" />
            </div>
          </div>
          <div className="-ml-[22px] mt-[2px]"><HRuler /></div>
        </div>
        <div className="flex">
          <div className="ml-[2px] shrink-0"><VRuler /></div>
          <div className="ml-[259px] shrink-0"><Page /></div>
        </div>
      </div>
      <TablePropertiesDialog />
      <BordersDialog />
    </div>
  );
}
